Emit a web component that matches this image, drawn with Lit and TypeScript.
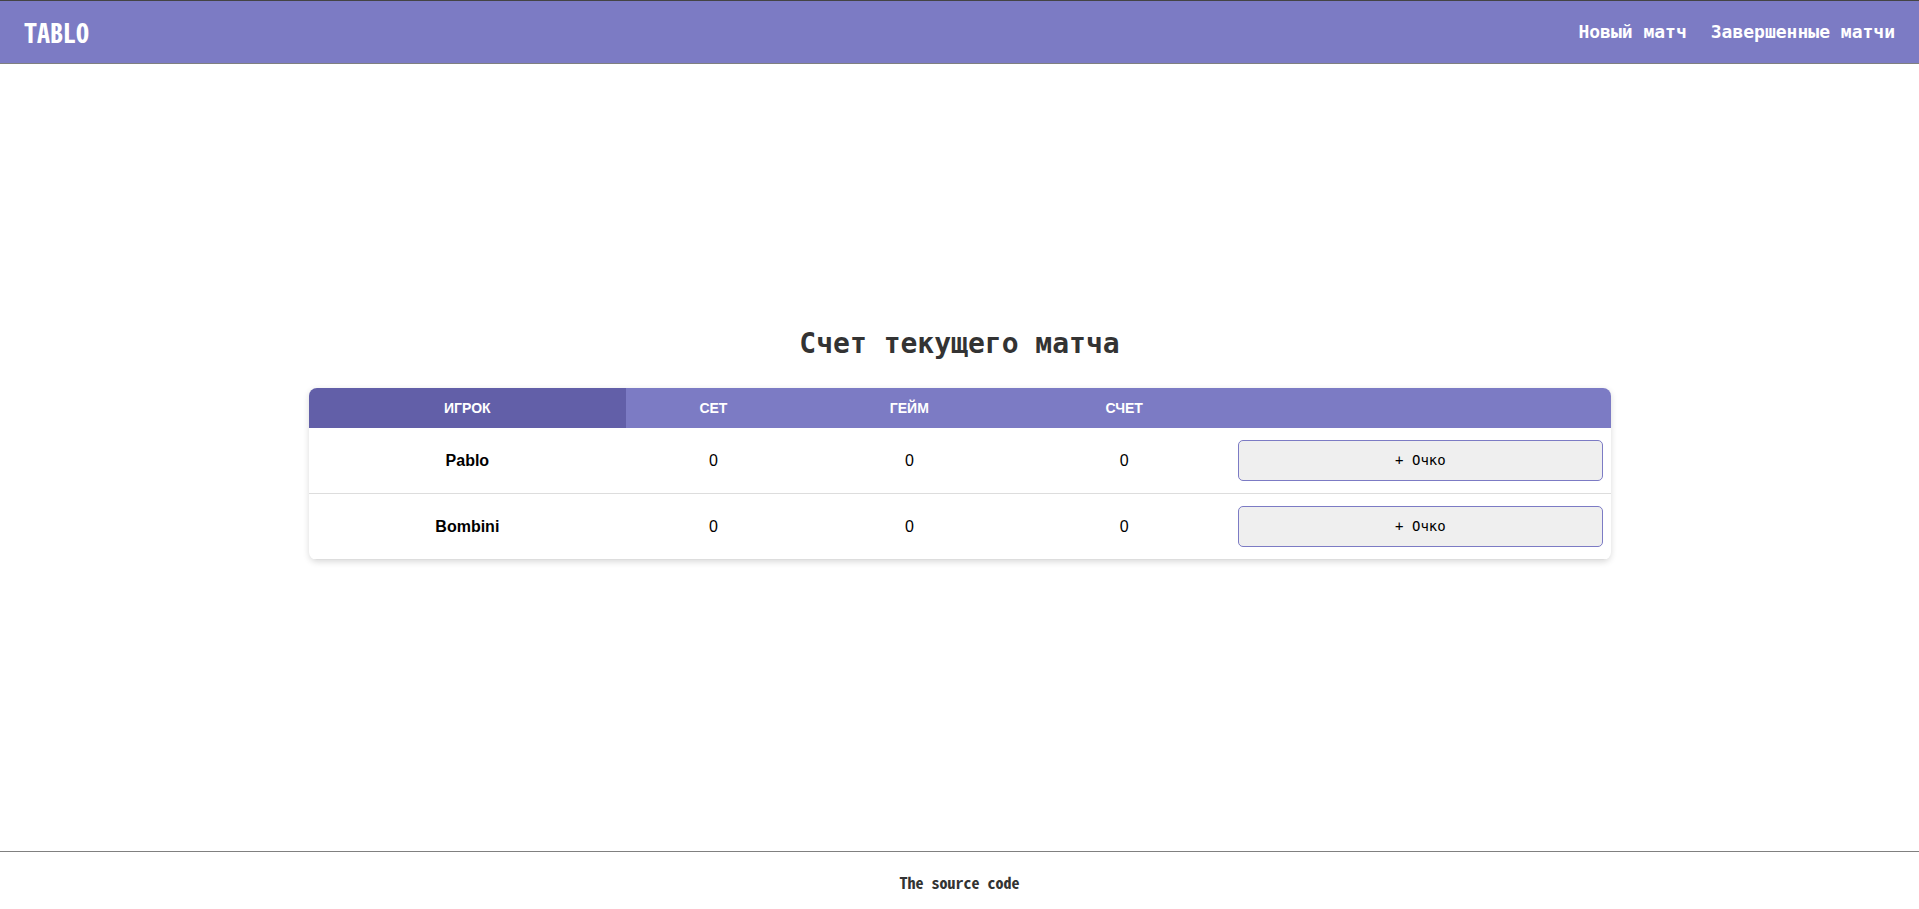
import { LitElement, html, css } from "lit";
import { customElement, state } from "lit/decorators.js";

interface Player {
  name: string;
  set: number;
  game: number;
  points: number;
}

@customElement("app-root")
export class AppRoot extends LitElement {
  static styles = css`
    :host {
      display: flex;
      flex-direction: column;
      min-height: 100vh;
      box-sizing: border-box;
      background: #fff;
      color: #333;
      font-family: "DejaVu Sans Mono", monospace;
    }
    .header {
      display: flex;
      align-items: center;
      justify-content: space-between;
      box-sizing: border-box;
      min-height: 64px;
      padding: 0 24px;
      background: #7c7bc4;
      border-top: 1px solid #444;
      border-bottom: 1px solid #808080;
    }
    .logo,
    .source {
      font-family: "Noto Sans Mono CJK SC", "DejaVu Sans Mono", monospace;
      font-weight: 700;
      text-decoration: none;
    }
    .logo {
      color: #fff;
      font-size: 26px;
      line-height: 32px;
    }
    .nav {
      display: flex;
      gap: 24px;
    }
    .nav-link {
      color: #fff;
      font-size: 18px;
      line-height: 24px;
      font-weight: 700;
      text-decoration: none;
    }
    .main {
      flex: 1;
      display: flex;
      flex-direction: column;
      align-items: center;
      justify-content: center;
      gap: 26px;
      padding-bottom: 30px;
    }
    .title {
      margin: 0;
      font-size: 28px;
      line-height: 36px;
      font-weight: 700;
    }
    .table {
      width: 90%;
      max-width: 1302px;
      table-layout: fixed;
      border-collapse: separate;
      border-spacing: 0;
      border-radius: 8px;
      overflow: hidden;
      box-shadow: 0 2px 6px rgba(0, 0, 0, 0.15);
      font-family: "Liberation Sans", Arial, sans-serif;
      font-size: 16px;
      line-height: 24px;
      color: #000;
      text-align: center;
    }
    .col-player { width: 24.4%; }
    .col-set { width: 13.4%; }
    .col-game { width: 16.7%; }
    .col-points { width: 16.3%; }
    .head {
      padding: 8px;
      background: #7c7bc4;
      color: #fff;
      font-size: 14px;
      text-transform: uppercase;
    }
    .head-player {
      background: #625fa8;
    }
    .cell {
      padding: 14px 8px 12px;
      border-bottom: 1px solid #ddd;
      font-weight: 400;
    }
    .name {
      font-weight: 700;
    }
    .action {
      padding: 12px 8px;
    }
    .point {
      display: block;
      width: 100%;
      height: 41px;
      box-sizing: border-box;
      border: 1px solid #7c7bc4;
      border-radius: 5px;
      background: #efefef;
      color: #000;
      font-family: "DejaVu Sans Mono", monospace;
      font-size: 14px;
      cursor: pointer;
    }
    .footer {
      display: flex;
      align-items: center;
      justify-content: center;
      box-sizing: border-box;
      min-height: 58px;
      padding-top: 2px;
      border-top: 1px solid #808080;
    }
    .source {
      color: #333;
      font-size: 16px;
      line-height: 24px;
    }
  `;

  @state()
  private players: Player[] = [
    { name: "Pablo", set: 0, game: 0, points: 0 },
    { name: "Bombini", set: 0, game: 0, points: 0 },
  ];

  private addPoint(index: number) {
    this.players = this.players.map((p, i) =>
      i === index ? { ...p, points: p.points + 1 } : p
    );
  }

  render() {
    return html`
      <header class="header">
        <a class="logo" href="#">TABLO</a>
        <nav class="nav">
          <a class="nav-link" href="#new">Новый матч</a>
          <a class="nav-link" href="#finished">Завершенные матчи</a>
        </nav>
      </header>
      <main class="main">
        <h1 class="title">Счет текущего матча</h1>
        <table class="table">
          <colgroup>
            <col class="col-player" />
            <col class="col-set" />
            <col class="col-game" />
            <col class="col-points" />
            <col />
          </colgroup>
          <thead>
            <tr>
              <th class="head head-player" scope="col">Игрок</th>
              <th class="head" scope="col">Сет</th>
              <th class="head" scope="col">Гейм</th>
              <th class="head" scope="col">Счет</th>
              <td class="head"></td>
            </tr>
          </thead>
          <tbody>
            ${this.players.map(
              (p, i) => html`
                <tr>
                  <th class="cell name" scope="row">${p.name}</th>
                  <td class="cell">${p.set}</td>
                  <td class="cell">${p.game}</td>
                  <td class="cell">${p.points}</td>
                  <td class="cell action">
                    <button class="point" type="button" @click=${() => this.addPoint(i)}>
                      + Очко
                    </button>
                  </td>
                </tr>
              `
            )}
          </tbody>
        </table>
      </main>
      <footer class="footer">
        <a class="source" href="#source">The source code</a>
      </footer>
    `;
  }
}
